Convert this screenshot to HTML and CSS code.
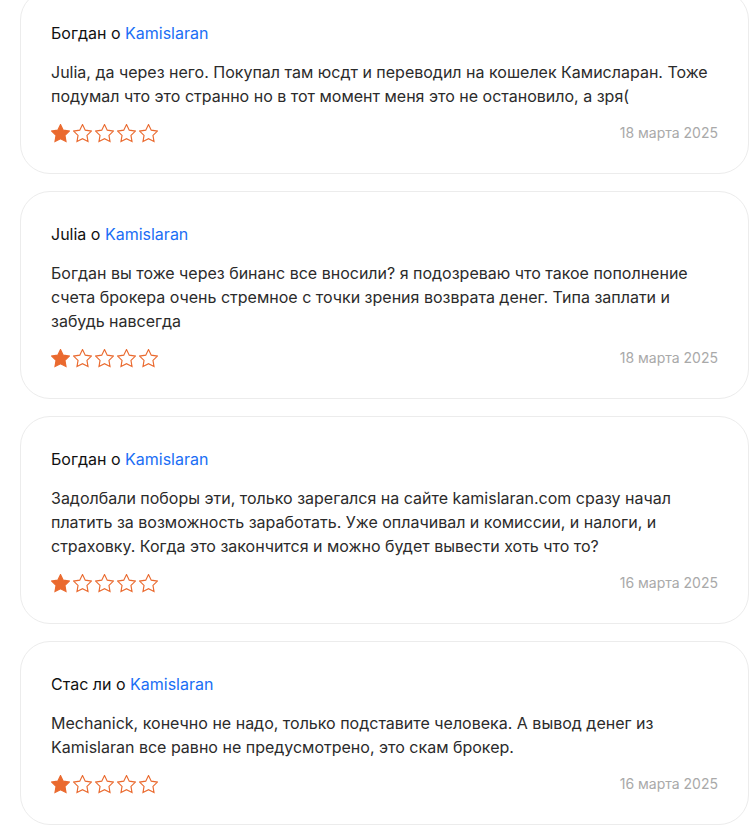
FILE: index.html
```html
<!DOCTYPE html>
<html lang="ru">
<head>
<meta charset="utf-8">
<link rel="stylesheet" href="styles.css">
</head>
<body>
<svg width="0" height="0" class="defs">
  <defs>
    <path id="star" d="M12 2.6l2.9 5.9 6.5.95-4.7 4.6 1.1 6.45L12 17.45 6.2 20.5l1.1-6.45-4.7-4.6 6.5-.95z"/>
  </defs>
</svg>
<div class="list">
  <div class="card">
    <div class="title">Богдан о <a class="link">Kamislaran</a></div>
    <p class="text">Julia, да через него. Покупал там юсдт и переводил на кошелек Камисларан. Тоже подумал что это странно но в тот момент меня это не остановило, а зря(</p>
    <div class="foot">
      <div class="stars">
        <svg class="star full" viewBox="2 2 20 20"><use href="#star"/></svg>
        <svg class="star" viewBox="2 2 20 20"><use href="#star"/></svg>
        <svg class="star" viewBox="2 2 20 20"><use href="#star"/></svg>
        <svg class="star" viewBox="2 2 20 20"><use href="#star"/></svg>
        <svg class="star" viewBox="2 2 20 20"><use href="#star"/></svg>
      </div>
      <span class="date">18 марта 2025</span>
    </div>
  </div>
  <div class="card">
    <div class="title">Julia о <a class="link">Kamislaran</a></div>
    <p class="text">Богдан вы тоже через бинанс все вносили? я подозреваю что такое пополнение счета брокера очень стремное с точки зрения возврата денег. Типа заплати и забудь навсегда</p>
    <div class="foot">
      <div class="stars">
        <svg class="star full" viewBox="2 2 20 20"><use href="#star"/></svg>
        <svg class="star" viewBox="2 2 20 20"><use href="#star"/></svg>
        <svg class="star" viewBox="2 2 20 20"><use href="#star"/></svg>
        <svg class="star" viewBox="2 2 20 20"><use href="#star"/></svg>
        <svg class="star" viewBox="2 2 20 20"><use href="#star"/></svg>
      </div>
      <span class="date">18 марта 2025</span>
    </div>
  </div>
  <div class="card">
    <div class="title">Богдан о <a class="link">Kamislaran</a></div>
    <p class="text">Задолбали поборы эти, только зарегался на сайте kamislaran.com сразу начал платить за возможность заработать. Уже оплачивал и комиссии, и налоги, и страховку. Когда это закончится и можно будет вывести хоть что то?</p>
    <div class="foot">
      <div class="stars">
        <svg class="star full" viewBox="2 2 20 20"><use href="#star"/></svg>
        <svg class="star" viewBox="2 2 20 20"><use href="#star"/></svg>
        <svg class="star" viewBox="2 2 20 20"><use href="#star"/></svg>
        <svg class="star" viewBox="2 2 20 20"><use href="#star"/></svg>
        <svg class="star" viewBox="2 2 20 20"><use href="#star"/></svg>
      </div>
      <span class="date">16 марта 2025</span>
    </div>
  </div>
  <div class="card">
    <div class="title">Стас ли о <a class="link">Kamislaran</a></div>
    <p class="text">Mechanick, конечно не надо, только подставите человека. А вывод денег из Kamislaran все равно не предусмотрено, это скам брокер.</p>
    <div class="foot">
      <div class="stars">
        <svg class="star full" viewBox="2 2 20 20"><use href="#star"/></svg>
        <svg class="star" viewBox="2 2 20 20"><use href="#star"/></svg>
        <svg class="star" viewBox="2 2 20 20"><use href="#star"/></svg>
        <svg class="star" viewBox="2 2 20 20"><use href="#star"/></svg>
        <svg class="star" viewBox="2 2 20 20"><use href="#star"/></svg>
      </div>
      <span class="date">16 марта 2025</span>
    </div>
  </div>
</div>
</body>
</html>
```
FILE: styles.css
```css
html, body {
  margin: 0;
  padding: 0;
  background: #fff;
}
body {
  font-family: Inter, "Noto Sans", sans-serif;
  font-size: 16px;
  color: #222;
  overflow: hidden;
}
.defs {
  position: absolute;
  width: 0;
  height: 0;
}
.list {
  display: flex;
  flex-direction: column;
  gap: 17px;
  padding: 0 4px 0 20px;
  margin-top: -10px;
}
.card {
  border: 1px solid #ececec;
  border-radius: 30px;
  padding: 32px 30px 30px 30px;
  background: #fff;
}
.title {
  line-height: 20px;
  color: #111;
}
.link {
  color: #1a6ef5;
  text-decoration: none;
}
.text {
  margin: 17px 0 0;
  line-height: 24px;
  color: #2b2b2b;
}
.foot {
  margin-top: 15px;
  display: flex;
  align-items: center;
  justify-content: space-between;
}
.stars {
  display: flex;
  gap: 3px;
}
.star {
  width: 19px;
  height: 19px;
  fill: #fff;
  stroke: #ea6a2f;
  stroke-width: 1.2;
  stroke-linejoin: miter;
}
.star.full {
  fill: #ea6a2f;
}
.date {
  font-size: 14px;
  color: #a9a9a9;
  line-height: 20px;
}
```
